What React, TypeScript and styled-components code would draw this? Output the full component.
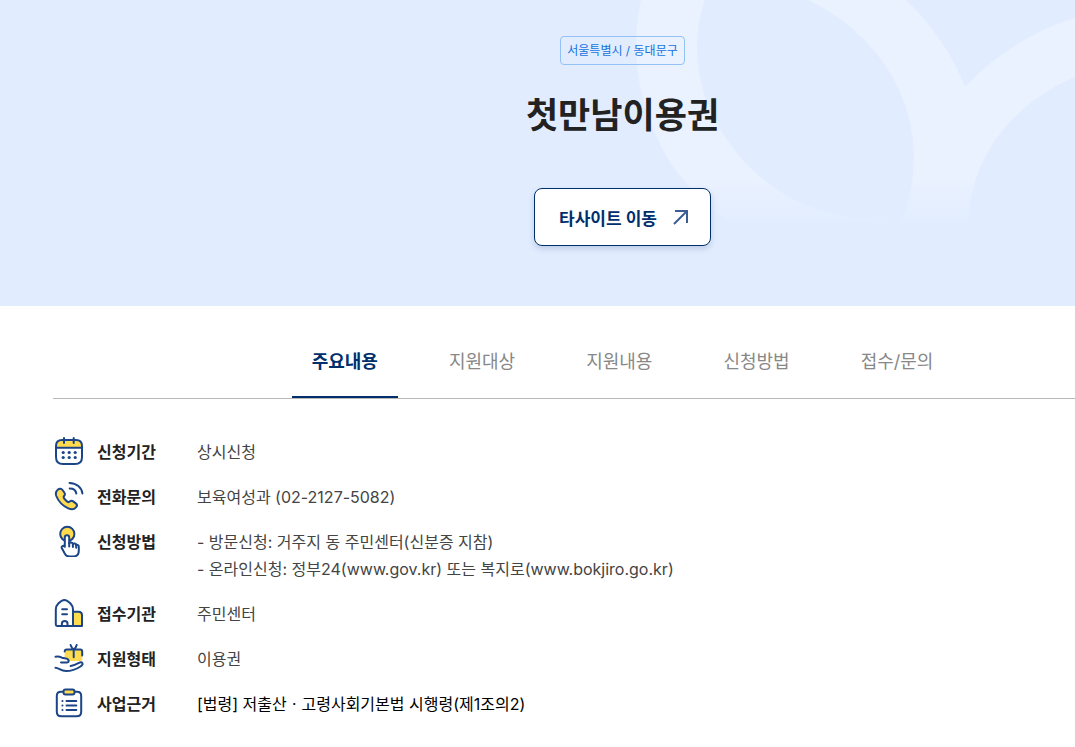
import React from "react";
import styled, { createGlobalStyle } from "styled-components";

const NAVY = "#002f6c";
const ICON_LINE = "#1c4587";
const YELLOW = "#ffdb4d";

const GlobalStyle = createGlobalStyle`
  * { box-sizing: border-box; }
  body {
    margin: 0;
    background: #fff;
    color: #222;
    font-family: Inter, "Noto Sans CJK KR", sans-serif;
    font-size: 16px;
    line-height: 27px;
  }
`;

const Hero = styled.header`
  position: relative;
  display: flex;
  flex-direction: column;
  align-items: center;
  padding: 36px 0 60px 170px;
  background: #e1edff;
`;

const HeroPattern = styled.svg`
  position: absolute;
  top: 0;
  right: 0;
`;

const RegionTag = styled.span`
  position: relative;
  padding: 0 6px;
  border: 1px solid #93c1f5;
  border-radius: 4px;
  color: #1672e0;
  font-size: 12px;
`;

const Title = styled.h1`
  position: relative;
  margin: 25px 0 47px;
  font-size: 35px;
  font-weight: 700;
  line-height: 51px;
`;

const SiteButton = styled.button`
  position: relative;
  display: flex;
  align-items: center;
  gap: 15px;
  height: 58px;
  padding: 0 20px 0 24px;
  border: 1px solid ${NAVY};
  border-radius: 8px;
  background: #fff;
  box-shadow: 0 3px 6px rgba(0, 30, 90, 0.16);
  color: ${NAVY};
  font-family: inherit;
  font-size: 17px;
  font-weight: 700;
  cursor: pointer;
`;

const Main = styled.main`
  padding: 34px 0 32px 53px;
`;

const Tabs = styled.nav`
  display: flex;
  justify-content: center;
  gap: 31px;
  padding-left: 117px;
  border-bottom: 1px solid #b8b8b8;
`;

const Tab = styled.a<{ $active?: boolean }>`
  padding: 5px 20px 18px;
  border-bottom: 2px solid ${(p) => (p.$active ? NAVY : "transparent")};
  color: ${(p) => (p.$active ? NAVY : "#888")};
  font-size: 18px;
  font-weight: ${(p) => (p.$active ? 700 : 400)};
  line-height: 33px;
  text-decoration: none;
`;

const InfoList = styled.dl`
  display: flex;
  flex-direction: column;
  gap: 18px;
  margin: 40px 0 0;
`;

const InfoRow = styled.div`
  display: flex;
  align-items: flex-start;
`;

const InfoIcon = styled.svg`
  flex: none;
  width: 32px;
  height: 32px;
  margin: -4px 12px -1px 0;
  fill: none;
  stroke: ${ICON_LINE};
  stroke-width: 2;
  stroke-linecap: round;
  stroke-linejoin: round;
`;

const InfoLabel = styled.dt`
  flex: none;
  width: 100px;
  font-weight: 700;
`;

const InfoValue = styled.dd<{ $strong?: boolean }>`
  margin: 0;
  color: ${(p) => (p.$strong ? "#000" : "#444")};
  white-space: pre-line;
`;

const CalendarIcon = () => (
  <InfoIcon viewBox="0 0 32 32" aria-hidden="true">
    <path d="M3 12.700V11c0-4 2-6 6-6h14c4 0 6 2 6 6v1.700z" fill={YELLOW} />
    <path d="M3 12.700V22c0 5 2 7 7 7h12c5 0 7-2 7-7v-9.300M11 3v5M20.700 3v5" />
    <g fill={ICON_LINE} stroke="none">
      {[17.5, 22.5].map((y) => [10.2, 16.2, 22.2].map((x) => <circle key={`${x}-${y}`} cx={x} cy={y} r="1.6" />))}
    </g>
  </InfoIcon>
);

const PhoneIcon = () => (
  <InfoIcon viewBox="0 0 32 32" aria-hidden="true">
    <path
      d="M5 9.500C6.500 8.200 8.300 8.500 9.500 10l1.800 2.500c.9 1.300.8 2.500-.2 3.500-.8.900-.7 1.400.2 2.600 1 1.300 1.800 2.100 3 3 1 .8 1.600.8 2.500 0 1.100-1 2.400-1 3.700 0l2.300 1.800c1.300 1 1.500 2.300.5 3.600-1.800 2.300-4.700 2.900-8 1.400-5.500-2.500-10-7.400-12-12.400-1-2.800-.4-4.900 1.700-6.500z"
      fill={YELLOW}
    />
    <path d="M16.500 2.900c7 .2 12.300 4.500 12.900 10.600M16.700 8.400c3.700 0 6.200 2 6.600 5.100" />
  </InfoIcon>
);

const TouchIcon = () => (
  <InfoIcon viewBox="0 0 32 32" aria-hidden="true">
    <circle cx="14.300" cy="8.900" r="7.100" fill={YELLOW} />
    <path
      d="M11.800 21.800v-9.300c0-3 4.400-3 4.400 0v5.800c.5-1.300 3.400-1.100 3.700.8.700-1.100 3.100-.8 3.300 1 1.200-.7 2.600.1 2.600 1.700v3.700c0 3.700-2 6-5.500 6h-3.600c-2.600 0-4.100-1-5.100-3.200l-2.700-5.100c-.9-1.900 1.700-3.200 2.900-1.400z"
      fill="#fff"
    />
    <path d="M16.200 18v3.500M19.900 19v3M23.200 20.200v2.500" />
  </InfoIcon>
);

const BuildingIcon = () => (
  <InfoIcon viewBox="0 0 32 32" aria-hidden="true">
    <path d="M20 14.800h5.500c2.200 0 3.500 1.300 3.500 3.500V29h-9z" fill={YELLOW} />
    <path d="M4.500 29c-1.200 0-1.700-.7-1.700-1.800V12.500c0-2.500.8-4.300 2.500-6C7 4.800 9 3 11.400 3s4.400 1.800 6.100 3.500c1.700 1.700 2.500 3.500 2.500 6V29z" />
    <path d="M9.200 12.200h4.800M9.200 17.200h4.800M8.900 29v-2.500c0-3.500 5.600-3.500 5.600 0V29" />
  </InfoIcon>
);

const GiftIcon = () => (
  <InfoIcon viewBox="0 0 32 32" aria-hidden="true">
    <path d="M11.700 9.500c0-1.400.8-2 2-2h13.500c1.300 0 2 .7 2 2v7.500c0 1.200-.8 2-2 2H16.500c.2-2.400-2-3.600-4.800-3.600z" fill={YELLOW} stroke="none" />
    <path d="M11.700 9.500c0-1.400.8-2 2-2h13.500c1.300 0 2 .7 2 2v4M20.700 7.500v7.700M17.600 3c.7 2.200 1.700 3.700 3.100 4.500 1.400-.8 2.400-2.300 3-4.500" />
    <path d="M2.500 14.800c2.600-.6 4.300-.1 6.500.9 2.800 1 6.700.1 6.700 3.200 0 2.200-2.800 1.800-7.700 1.500M2.500 25.800c3.500 0 5 3.300 10.500 3.300 5.200 0 10.300-1.800 14.500-4.600 3.600-2.500 2-5.400-1.600-3.600-3 1.600-5.400 2.600-8.300 3.200" />
  </InfoIcon>
);

const ClipboardIcon = () => (
  <InfoIcon viewBox="0 0 32 32" aria-hidden="true">
    <path d="M10.500 4.700H8c-2.800 0-4.200 1.400-4.200 4.200v15.800c0 3 1.500 4.500 4.500 4.500h15.400c3 0 4.500-1.500 4.500-4.500V8.900c0-2.800-1.400-4.200-4.200-4.200h-2.500" />
    <rect x="10.500" y="2.500" width="11" height="5" rx="2" fill={YELLOW} />
    <path d="M9.400 14h.100M13.500 14h9.800M9.400 18.500h.100M13.500 18.500h9.800M9.400 23h.100M13.500 23h9.800" />
  </InfoIcon>
);

const tabs = ["주요내용", "지원대상", "지원내용", "신청방법", "접수/문의"];

const info = [
  { Icon: CalendarIcon, label: "신청기간", value: "상시신청" },
  { Icon: PhoneIcon, label: "전화문의", value: "보육여성과 (02-2127-5082)" },
  {
    Icon: TouchIcon,
    label: "신청방법",
    value: "- 방문신청: 거주지 동 주민센터(신분증 지참)\n- 온라인신청: 정부24(www.gov.kr) 또는 복지로(www.bokjiro.go.kr)",
  },
  { Icon: BuildingIcon, label: "접수기관", value: "주민센터" },
  { Icon: GiftIcon, label: "지원형태", value: "이용권" },
  { Icon: ClipboardIcon, label: "사업근거", value: "[법령] 저출산ㆍ고령사회기본법 시행령(제1조의2)", strong: true },
];

export default function App() {
  return (
    <>
      <GlobalStyle />
      <Hero>
        <HeroPattern width="440" height="225" viewBox="635 0 440 225" aria-hidden="true">
          <defs>
            <linearGradient id="ringFade" gradientUnits="userSpaceOnUse" x1="0" y1="180" x2="0" y2="225">
              <stop offset="0" stopColor="#eaf1ff" />
              <stop offset="1" stopColor="#eaf1ff" stopOpacity="0" />
            </linearGradient>
          </defs>
          <path
            fill="url(#ringFade)"
            fillRule="evenodd"
            d="M641 0C636 25 635 45 637 63C640 97 649 123 663 150C671 165 680 177 690 187C705 204 719 215 735 225H968C970 160 1008 106 1075 77V18C1035 30 995 55 965 87C953 55 932 25 906 0ZM705 0C699 16 697 32 697 50C698 86 710 118 733 148C746 165 759 177 773 187C802 207 834 217 867 219L901 222C910 200 914 180 914 155C913 90 872 30 808 0Z"
          />
        </HeroPattern>
        <RegionTag>서울특별시 / 동대문구</RegionTag>
        <Title>첫만남이용권</Title>
        <SiteButton type="button">
          타사이트 이동
          <svg width="18" height="18" viewBox="0 0 18 18" fill="none" stroke="#3c5c95" strokeWidth="2" aria-hidden="true">
            <path d="M3 3h12v12M15 3L2 16" />
          </svg>
        </SiteButton>
      </Hero>
      <Main>
        <Tabs>
          {tabs.map((name, i) => (
            <Tab key={name} href={`#section-${i + 1}`} $active={i === 0}>
              {name}
            </Tab>
          ))}
        </Tabs>
        <InfoList>
          {info.map(({ Icon, label, value, strong }) => (
            <InfoRow key={label}>
              <Icon />
              <InfoLabel>{label}</InfoLabel>
              <InfoValue $strong={strong}>{value}</InfoValue>
            </InfoRow>
          ))}
        </InfoList>
      </Main>
    </>
  );
}
